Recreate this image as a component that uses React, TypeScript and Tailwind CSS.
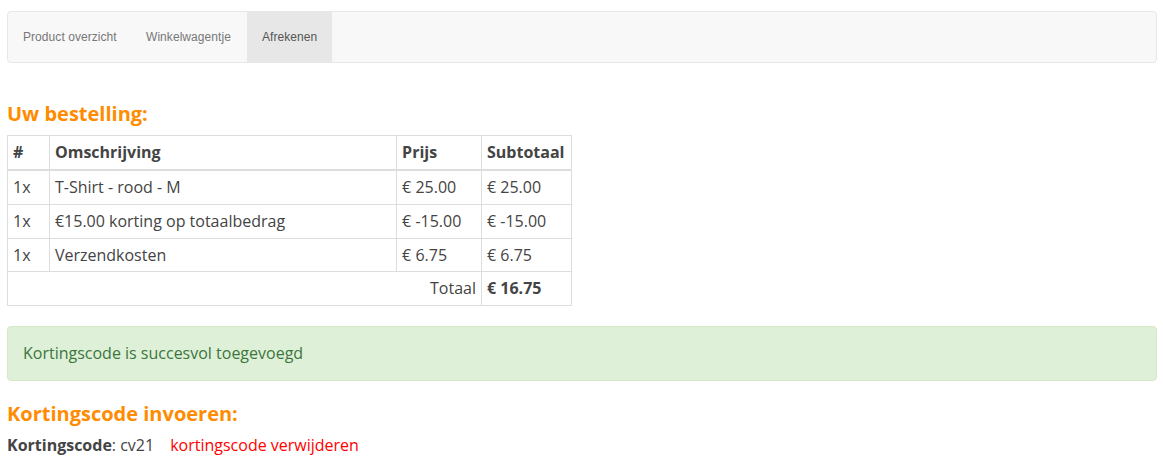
const rows = [
  { qty: '1x', desc: 'T-Shirt - rood - M', price: '€ 25.00', sub: '€ 25.00' },
  { qty: '1x', desc: '€15.00 korting op totaalbedrag', price: '€ -15.00', sub: '€ -15.00' },
  { qty: '1x', desc: 'Verzendkosten', price: '€ 6.75', sub: '€ 6.75' },
];

const navItems = [
  { label: 'Product overzicht', active: false, width: 'w-[123px]' },
  { label: 'Winkelwagentje', active: false, width: 'w-[116px]' },
  { label: 'Afrekenen', active: true, width: 'w-[85px]' },
];

export default function App() {
  return (
    <div className="min-h-screen bg-white pl-[7px] pr-[6px] pt-[11px] font-['Open_Sans',sans-serif] text-[16px] leading-[1.42857] text-[#444]">
      <nav className="flex h-[52px] rounded-[4px] border border-[#e7e7e7] bg-[#f8f8f8]">
        {navItems.map((item) => (
          <a
            key={item.label}
            href="#"
            className={
              'flex items-center whitespace-nowrap pl-[15px] pt-[1px] font-["Liberation_Sans",Arial,sans-serif] text-[12px] tracking-[0.06px] ' +
              item.width +
              ' ' +
              (item.active ? 'bg-[#e7e7e7] text-[#555]' : 'text-[#777]')
            }
          >
            {item.label}
          </a>
        ))}
      </nav>

      <h3 className="mt-[40px] text-[20px] font-bold leading-[22px] text-[#ff8c00]">Uw bestelling:</h3>

      <table className="mt-[10px] w-[565px] border-collapse border border-[#ddd]">
        <thead>
          <tr className="border-b-2 border-[#ddd] text-left font-bold">
            <th className="w-[42px] border border-[#ddd] p-[5px]">#</th>
            <th className="w-[348px] border border-[#ddd] p-[5px]">Omschrijving</th>
            <th className="w-[85px] border border-[#ddd] p-[5px]">Prijs</th>
            <th className="w-[90px] border border-[#ddd] p-[5px]">Subtotaal</th>
          </tr>
        </thead>
        <tbody>
          {rows.map((r) => (
            <tr key={r.desc}>
              <td className="border border-[#ddd] p-[5px]">{r.qty}</td>
              <td className="border border-[#ddd] p-[5px]">{r.desc}</td>
              <td className="border border-[#ddd] p-[5px]">{r.price}</td>
              <td className="border border-[#ddd] p-[5px]">{r.sub}</td>
            </tr>
          ))}
          <tr>
            <td colSpan={3} className="border border-[#ddd] p-[5px] text-right">
              Totaal
            </td>
            <td className="border border-[#ddd] p-[5px] font-bold">€ 16.75</td>
          </tr>
        </tbody>
      </table>

      <div className="mt-5 rounded-[4px] border border-[#d6e9c6] bg-[#dff0d8] p-[15px] text-[#3c763d]">
        Kortingscode is succesvol toegevoegd
      </div>

      <h3 className="mt-[22px] text-[20px] font-bold leading-[22px] text-[#ff8c00]">Kortingscode invoeren:</h3>

      <p className="mt-[9px]">
        <b>Kortingscode</b>: cv21
        <a href="#" className="ml-[16px] text-[#f00]">
          kortingscode verwijderen
        </a>
      </p>
    </div>
  );
}
